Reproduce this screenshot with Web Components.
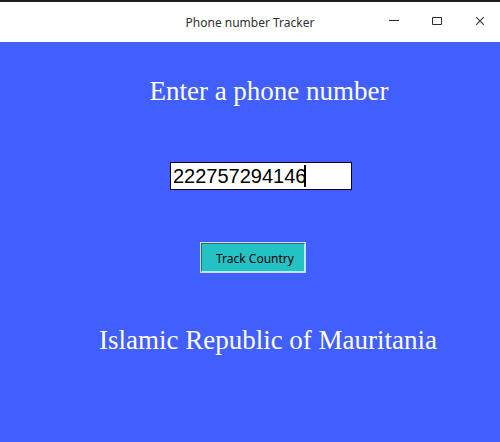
<!DOCTYPE html>
<html lang="en">
<head>
<meta charset="utf-8">
<title>Phone number Tracker</title>
<style>
html, body { margin: 0; min-height: 100%; background: #415eff; }
</style>
</head>
<body>
<app-window>
  <title-bar slot="bar">Phone number Tracker</title-bar>
  <tracker-form></tracker-form>
</app-window>
<script>
const define = (name, html, setup) => customElements.define(name, class extends HTMLElement {
  constructor() {
    super();
    const t = document.createElement('template');
    t.innerHTML = html;
    this.attachShadow({ mode: 'open' }).append(t.content.cloneNode(true));
    if (setup) setup(this);
  }
});

define('app-window', `
<style>
:host { display: flex; flex-direction: column; min-height: 100vh; box-sizing: border-box; border-top: 2px solid #1e1c1d; background: #415eff; }
</style>
<slot name="bar"></slot><slot></slot>`);

define('title-bar', `
<style>
:host { display: grid; grid-template-columns: 1fr auto 1fr; align-items: center; height: 40px; background: #fff; color: #303030; font: 12px/18px "Noto Sans", sans-serif; }
h1 { grid-column: 2; margin: 0; padding-top: 2px; font: inherit; }
nav { display: flex; justify-content: flex-end; gap: 27px; padding-right: 12px; }
button { display: block; border: 0; padding: 0; background: none; color: #2d2d2d; height: 16px; width: 16px; }
svg { display: block; }
</style>
<h1><slot></slot></h1>
<nav aria-label="Window">
  <button aria-label="Minimize"><svg width="16" height="16"><path d="M3 6.500h10" stroke="#2d2d2d"/></svg></button>
  <button aria-label="Maximize"><svg width="16" height="16"><path d="M3.500 3.500h9v7h-9z" fill="none" stroke="#2d2d2d"/></svg></button>
  <button aria-label="Close"><svg width="16" height="16"><path d="M4.200 3.200l7.600 7.600M11.800 3.200l-7.600 7.600" stroke="#3a3a3a" stroke-width="1.200"/></svg></button>
</nav>`);

define('phone-entry', `
<style>
:host { display: block; position: relative; width: 182px; }
input { display: block; box-sizing: border-box; width: 100%; height: 28px; margin: 0; padding: 0 2px; border: 1px solid #000; border-radius: 0; outline: 0; background: #fff; color: #000; font: 20px/24px "Liberation Sans", Arial, sans-serif; caret-color: transparent; }
i { position: absolute; left: 134px; top: 3px; width: 2px; height: 22px; background: #000; }
</style>
<input type="tel" aria-label="Enter a phone number" value="222757294146"><i></i>`);

define('track-button', `
<style>
:host { display: block; }
button { display: block; margin: 0; padding: 6px 10px 3px 14px; border: 1px solid; border-color: #1d7476 #a4f5f7 #a4f5f7 #1d7476; outline: 1px solid #d9d9d9; border-radius: 0; background: #25c2c5; color: #000; font: 12px/18px "Noto Sans", sans-serif; }
</style>
<button type="button"><slot></slot></button>`);

define('tracker-form', `
<style>
:host { display: flex; flex-direction: column; align-items: center; padding-top: 33px; color: #fff; font: 27px/32px "Liberation Serif", "Times New Roman", serif; }
h2, output { margin: 0; font: inherit; padding-left: 38px; }
phone-entry { margin: 55px 0 53px 22px; }
track-button { margin-left: 6px; }
output { display: block; margin-top: 52px; padding-left: 36px; }
</style>
<h2>Enter a phone number</h2>
<phone-entry></phone-entry>
<track-button>Track Country</track-button>
<output>Islamic Republic of Mauritania</output>`);
</script>
</body>
</html>
